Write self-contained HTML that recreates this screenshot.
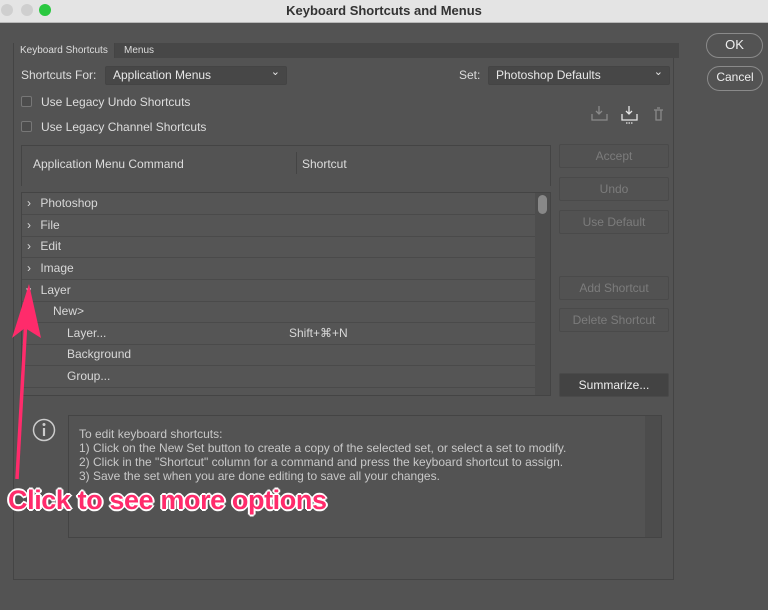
<!DOCTYPE html>
<html><head><meta charset="utf-8"><style>
*{margin:0;padding:0;box-sizing:border-box}
body{width:768px;height:610px;background:#535353;font-family:"Liberation Sans",Arial,sans-serif;position:relative;overflow:hidden;color:#d6d6d6}
.a{position:absolute}
.title{left:0;top:0;width:768px;height:23px;background:#e4e4e4;border-bottom:1px solid #b8b8b8;text-align:center;font-weight:bold;font-size:13px;line-height:22px;color:#333}
.dot{width:12px;height:12px;border-radius:50%;top:4px;background:#cfcfcf}
.panel{left:13px;top:43px;width:661px;height:537px;border:1px solid #444}
.tabs{left:14px;top:43px;width:665px;height:15px;background:#474747}
.tab{top:43px;height:15px;font-size:10px;line-height:15px;padding:0 6px;color:#ddd}
.sel{height:19px;background:#474747;border:1px solid #444;border-radius:2px;font-size:12px;line-height:17px;padding-left:7px;color:#e8e8e8}
.sel:after{content:"⌄";position:absolute;right:6px;top:-3px;font-size:11px}
.cb{width:11px;height:11px;border:1px solid #777;border-radius:2px;background:#4c4c4c}
.lbl{font-size:12px;color:#ddd}
.btn{left:559px;width:110px;height:24px;border:1px solid #4a4a4a;background:#525252;border-radius:2px;font-size:12px;line-height:22px;text-align:center;color:#7c7c7c}
.row{left:22px;width:513px;height:21.6px;border-bottom:1px solid #4a4a4a;font-size:12px;line-height:21px;color:#d8d8d8}
.pill{border:1.5px solid #8a8a8a;border-radius:13px;font-size:13px;text-align:center;line-height:21px;color:#eee}
.info{font-size:12px;line-height:14px;color:#c8c8c8}
</style></head><body>
<div class="a title">Keyboard Shortcuts and Menus</div>
<div class="a dot" style="left:1px"></div>
<div class="a dot" style="left:21px"></div>
<div class="a dot" style="left:39px;background:#2ac840"></div>

<div class="a panel"></div>
<div class="a tabs"></div>
<div class="a tab" style="left:14px;background:#535353;border-right:1px solid #444">Keyboard Shortcuts</div>
<div class="a tab" style="left:118px">Menus</div>

<div class="a lbl" style="left:21px;top:68px">Shortcuts For:</div>
<div class="a sel" style="left:105px;top:66px;width:182px">Application Menus</div>
<div class="a lbl" style="left:459px;top:68px">Set:</div>
<div class="a sel" style="left:488px;top:66px;width:182px">Photoshop Defaults</div>

<div class="a cb" style="left:21px;top:96px"></div>
<div class="a lbl" style="left:41px;top:95px">Use Legacy Undo Shortcuts</div>
<div class="a cb" style="left:21px;top:121px"></div>
<div class="a lbl" style="left:41px;top:120px">Use Legacy Channel Shortcuts</div>

<svg class="a" style="left:588px;top:104px" width="80" height="22" viewBox="0 0 80 22">
<g fill="none" stroke="#8a8a8a" stroke-width="1.3"><path d="M4 10v6h15v-6M11 2v8M8 7l3 3 3-3"/></g>
<g fill="none" stroke="#e6e6e6" stroke-width="1.3"><path d="M34 10v6h15v-6M41 2v8M38 7l3 3 3-3"/><path d="M38 19h7" stroke-dasharray="1.5 1"/></g>
<g fill="none" stroke="#8a8a8a" stroke-width="1.3"><path d="M66 6h9M68 6v10h5V6M69 4h3"/></g>
</svg>

<div class="a" style="left:21px;top:145px;width:530px;height:41px;border:1px solid #444;border-bottom:none;border-right:1px solid #444"></div>
<div class="a lbl" style="left:33px;top:157px">Application Menu Command</div>
<div class="a" style="left:296px;top:152px;width:1px;height:22px;background:#444"></div>
<div class="a lbl" style="left:302px;top:157px">Shortcut</div>

<div class="a" style="left:21px;top:192px;width:530px;height:204px;border:1px solid #444;background:#555"></div>
<div class="a" style="left:535px;top:193px;width:15px;height:202px;background:#4d4d4d"></div>
<div class="a" style="left:538px;top:195px;width:9px;height:19px;border-radius:5px;background:#888"></div>
<div class="a row" style="top:193px"><span style="margin-left:5px">›</span> <span style="margin-left:6px">Photoshop</span></div>
<div class="a row" style="top:215px"><span style="margin-left:5px">›</span> <span style="margin-left:6px">File</span></div>
<div class="a row" style="top:236px"><span style="margin-left:5px">›</span> <span style="margin-left:6px">Edit</span></div>
<div class="a row" style="top:258px"><span style="margin-left:5px">›</span> <span style="margin-left:6px">Image</span></div>
<div class="a row" style="top:280px"><span style="margin-left:3px;font-size:10px">∨</span> <span style="margin-left:5px">Layer</span></div>
<div class="a row" style="top:301px"><span style="margin-left:31px">New&gt;</span></div>
<div class="a row" style="top:323px"><span style="margin-left:45px">Layer...</span><span class="a" style="left:267px">Shift+⌘+N</span></div>
<div class="a row" style="top:344px"><span style="margin-left:45px">Background</span></div>
<div class="a row" style="top:366px"><span style="margin-left:45px">Group...</span></div>

<div class="a btn" style="top:144px">Accept</div>
<div class="a btn" style="top:177px">Undo</div>
<div class="a btn" style="top:210px">Use Default</div>
<div class="a btn" style="top:276px">Add Shortcut</div>
<div class="a btn" style="top:308px">Delete Shortcut</div>
<div class="a btn" style="top:373px;background:#434343;color:#eee">Summarize...</div>

<div class="a pill" style="left:706px;top:33px;width:57px;height:25px">OK</div>
<div class="a pill" style="left:707px;top:66px;width:56px;height:25px;font-size:12px">Cancel</div>

<svg class="a" style="left:32px;top:418px" width="24" height="24"><circle cx="12" cy="12" r="10.5" fill="none" stroke="#ccc" stroke-width="1.5"/><circle cx="12" cy="6.5" r="1.5" fill="#ccc"/><path d="M12 10v8" stroke="#ccc" stroke-width="2.2"/></svg>
<div class="a" style="left:68px;top:415px;width:594px;height:123px;border:1px solid #444;background:#535353"></div>
<div class="a" style="left:645px;top:416px;width:16px;height:121px;background:#4c4c4c"></div>
<div class="a info" style="left:79px;top:427px">To edit keyboard shortcuts:<br>1) Click on the New Set button to create a copy of the selected set, or select a set to modify.<br>2) Click in the "Shortcut" column for a command and press the keyboard shortcut to assign.<br>3) Save the set when you are done editing to save all your changes.</div>

<svg class="a" style="left:0;top:270px" width="60" height="220"><path d="M17 209L26 48" stroke="#ff2b6b" stroke-width="3.5"/><path d="M29 14L12 68L25 58L41 68Z" fill="#ff2b6b"/></svg>
<div class="a" style="left:8px;top:485px;font-size:27px;font-weight:bold;color:#ff2b6b;letter-spacing:-0.4px;text-shadow:1px 1px 0 #fff,-1px -1px 0 #fff,1px -1px 0 #fff,-1px 1px 0 #fff,0 2px 0 #fff,2px 0 0 #fff,0 -2px 0 #fff,-2px 0 0 #fff">Click to see more options</div>
</body></html>
